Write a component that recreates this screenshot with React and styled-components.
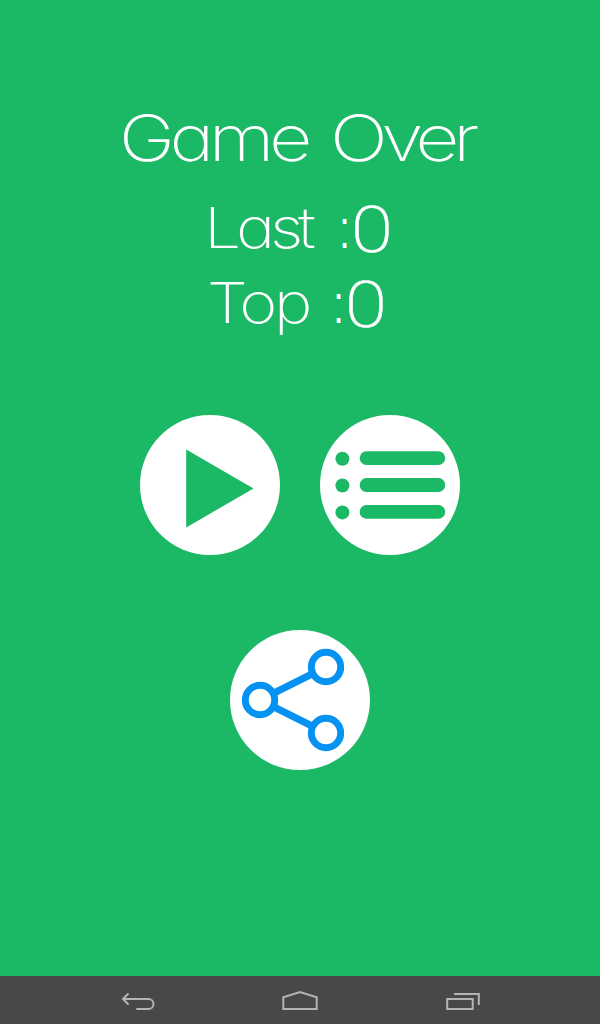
import styled, { createGlobalStyle } from 'styled-components';

const GlobalStyle = createGlobalStyle`
  body {
    margin: 0;
    background: #1bb865;
  }
`;

const Screen = styled.main`
  display: flex;
  flex-direction: column;
  width: 600px;
  height: 1024px;
  overflow: hidden;
  background: #1bb865;
  color: white;
  font-family: Inter, 'Liberation Sans', sans-serif;
  font-feature-settings: 'cv11', 'ss07';
`;

const Content = styled.div`
  flex: 1;
  padding-top: 102px;
`;

const TextRow = styled.div`
  display: flex;
  align-items: baseline;
  height: ${(props) => props.$height}px;
  padding-left: ${(props) => props.$indent}px;
`;

const Title = styled(TextRow).attrs({ as: 'h1' })`
  margin: 0;
  font-size: inherit;
`;

const Word = styled.span`
  flex: none;
  width: ${(props) => props.$width}px;
  font-size: ${(props) => props.$size}px;
  line-height: 72px;
  font-weight: 200;
  letter-spacing: ${(props) => props.$spacing || 0}px;
  white-space: nowrap;
  transform: scaleX(${(props) => props.$stretch || 1});
  transform-origin: left;
`;

const Colon = styled(Word)`
  width: 12px;
  font-size: 56px;
  font-weight: 300;
  transform: scaleX(0.7);
`;

const Score = styled(Word)`
  width: 40px;
  font-family: Roboto, sans-serif;
  font-size: 65px;
  -webkit-text-stroke: 0.5px white;
  transform: translateY(4px) scaleX(1.17);
`;

const Buttons = styled.div`
  display: flex;
  flex-wrap: wrap;
  justify-content: center;
  gap: 75px 40px;
  width: 400px;
  margin: 75px auto 0;
`;

const RoundButton = styled.button`
  width: 140px;
  height: 140px;
  padding: 0;
  border: none;
  border-radius: 50%;
  background: white;
  cursor: pointer;

  svg {
    display: block;
  }
`;

const NavBar = styled.nav`
  display: flex;
  justify-content: center;
  gap: 114px;
  height: 48px;
  background: #484849;
`;

const NavButton = styled.button`
  width: 48px;
  height: 48px;
  padding: 0;
  border: none;
  background: none;

  svg {
    display: block;
    fill: none;
    stroke: #b4b4b4;
    stroke-width: 2;
  }
`;

const PlayIcon = () => (
  <svg width="140" height="140" viewBox="0 0 140 140">
    <path d="M46.2 34.5 113.5 73.5 46.2 112.5Z" fill="#1bb865" />
  </svg>
);

const ListIcon = () => (
  <svg width="140" height="140" viewBox="0 0 140 140" fill="#1bb865">
    {[43.2, 70, 96.9].map((y) => (
      <g key={y}>
        <circle cx="22.4" cy={y + 0.5} r="7" />
        <rect x="39.7" y={y - 6.9} width="85.5" height="13.8" rx="6.9" />
      </g>
    ))}
  </svg>
);

const ShareIcon = () => (
  <svg width="140" height="140" viewBox="0 0 140 140" stroke="#0692f1" strokeWidth="7" fill="white">
    <path d="M96 37 30 70 96 103" fill="none" />
    <circle cx="30" cy="70" r="14.7" />
    <circle cx="96" cy="37" r="14.7" />
    <circle cx="96" cy="103" r="14.7" />
  </svg>
);

const BackIcon = () => (
  <svg width="48" height="48" viewBox="0 0 48 48">
    <path d="M14.5 17.5 9 23l5.500 5.500M9 23h25.500a5 5 0 0 1 0 10H22.300" />
  </svg>
);

const HomeIcon = () => (
  <svg width="48" height="48" viewBox="0 0 48 48">
    <path d="M7.300 33V21.300L24 16l16.700 5.300V33Z" />
  </svg>
);

const RecentIcon = () => (
  <svg width="48" height="48" viewBox="0 0 48 48">
    <path d="M9.200 23h25.500v10H9.200ZM16 18h24.800v11" />
  </svg>
);

const App = () => (
  <>
    <GlobalStyle />
    <Screen>
      <Content>
        <Title $height={88} $indent={119}>
          <Word $size={64} $width={211} $stretch={1.18} $spacing={-4.6}>Game</Word>
          <Word $size={64} $width={150} $stretch={1.2} $spacing={-5.5}>Over</Word>
        </Title>
        <TextRow $height={75} $indent={204}>
          <Word $size={56} $width={135} $stretch={1.18} $spacing={-4.4}>Last</Word>
          <Colon>:</Colon>
          <Score>0</Score>
        </TextRow>
        <TextRow $height={75} $indent={207}>
          <Word $size={56} $width={126} $stretch={1.16} $spacing={-2.9}>Top</Word>
          <Colon>:</Colon>
          <Score>0</Score>
        </TextRow>
        <Buttons>
          <RoundButton aria-label="Play">
            <PlayIcon />
          </RoundButton>
          <RoundButton aria-label="Scores">
            <ListIcon />
          </RoundButton>
          <RoundButton aria-label="Share">
            <ShareIcon />
          </RoundButton>
        </Buttons>
      </Content>
      <NavBar>
        <NavButton aria-label="Back">
          <BackIcon />
        </NavButton>
        <NavButton aria-label="Home">
          <HomeIcon />
        </NavButton>
        <NavButton aria-label="Recent">
          <RecentIcon />
        </NavButton>
      </NavBar>
    </Screen>
  </>
);

export default App;
